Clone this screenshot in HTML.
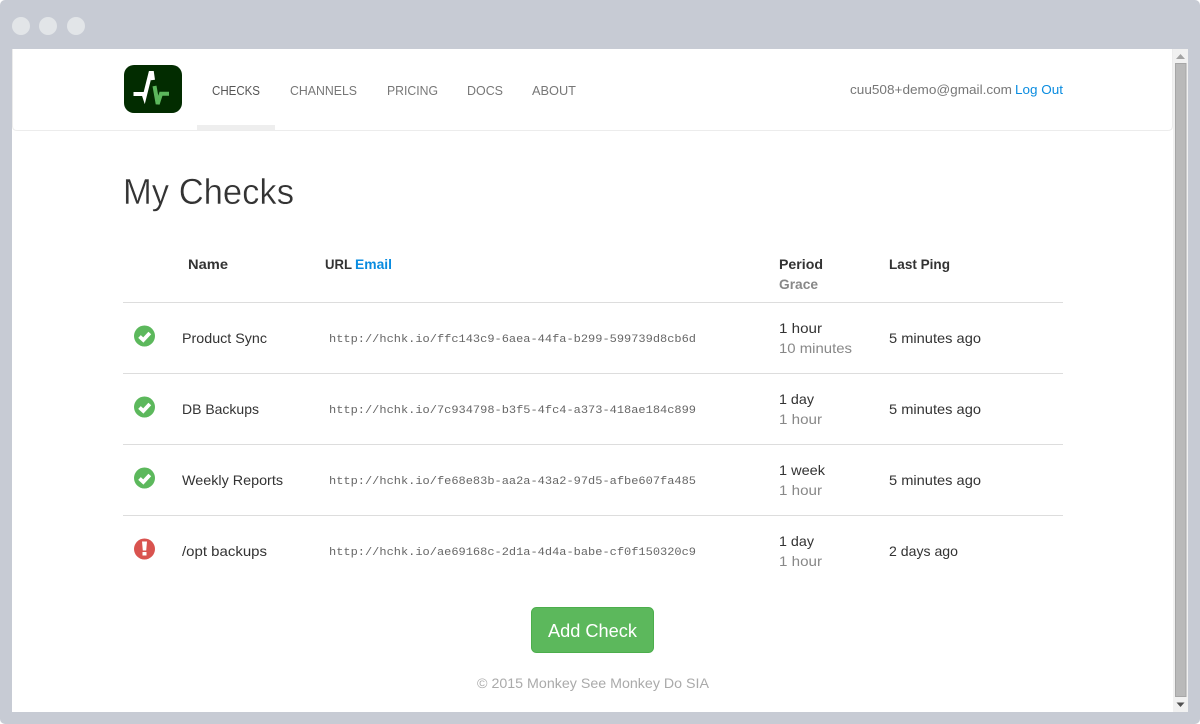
<!DOCTYPE html>
<html lang="en">
<head>
<meta charset="utf-8">
<title>My Checks</title>
<style>
html,body{margin:0;padding:0;width:1200px;height:724px;overflow:hidden;background:#fff}
svg{display:block}
text{font-family:"Liberation Sans",Arial,sans-serif;white-space:pre}
.n{font-size:14px;fill:#333}
.g{font-size:14px;fill:#888}
.b{font-size:14px;font-weight:bold;fill:#333}
.m{font-family:"Liberation Mono",monospace;font-size:11px;fill:#666}
.nav{font-size:13px;fill:#777}
</style>
</head>
<body>
<svg width="1200" height="724" viewBox="0 0 1200 724" xmlns="http://www.w3.org/2000/svg">
  <rect width="1200" height="724" rx="5" fill="#c7cbd4"/>
  <circle cx="21" cy="26" r="9" fill="#e2e5e8"/>
  <circle cx="48" cy="26" r="9" fill="#e2e5e8"/>
  <circle cx="76" cy="26" r="9" fill="#e2e5e8"/>
  <rect x="12" y="49" width="1176" height="663" fill="#fff"/>

  <!-- scrollbar -->
  <rect x="1173" y="49" width="15" height="663" fill="#f1f1f1"/>
  <path d="M1180.500 54 L1185 59 L1176 59 Z" fill="#a3a3a3"/>
  <rect x="1175.500" y="63.500" width="10.500" height="633" fill="#b9b9b9" stroke="#a6a6a6"/>
  <path d="M1176.500 702.500 L1184.500 702.500 L1180.500 707 Z" fill="#505050"/>

  <!-- navbar -->
  <path d="M12.500 49 V126 Q12.500 130.500 17 130.500 H1167.500 Q1172.500 130.500 1172.500 126 V49" fill="none" stroke="#ececec"/>
  <rect x="197" y="125" width="78" height="5" fill="#eeeeee"/>
  <rect x="124" y="65" width="58" height="48" rx="10" fill="#022c00"/>
  <path d="M133.500 94 H143.500 L144.500 97 L150.500 73 H152 L153 80" fill="none" stroke="#fff" stroke-width="4"/>
  <path d="M154.500 86 L157.700 104 L161 93.800 H169" fill="none" stroke="#5cb85c" stroke-width="4"/>

  <text class="nav" x="212" y="95" textLength="48" lengthAdjust="spacingAndGlyphs" style="fill:#555">CHECKS</text>
  <text class="nav" x="290" y="95" textLength="67" lengthAdjust="spacingAndGlyphs">CHANNELS</text>
  <text class="nav" x="387" y="95" textLength="51" lengthAdjust="spacingAndGlyphs">PRICING</text>
  <text class="nav" x="467" y="95" textLength="36" lengthAdjust="spacingAndGlyphs">DOCS</text>
  <text class="nav" x="532" y="95" textLength="44" lengthAdjust="spacingAndGlyphs">ABOUT</text>
  <text x="850" y="94" font-size="13" fill="#777" textLength="162" lengthAdjust="spacingAndGlyphs">cuu508+demo@gmail.com</text>
  <text x="1015" y="94" font-size="13" fill="#0a8ce0" textLength="48" lengthAdjust="spacingAndGlyphs">Log Out</text>

  <!-- heading -->
  <text x="123" y="204" font-size="36" fill="#333" stroke="#fff" stroke-width="0.4" textLength="171" lengthAdjust="spacingAndGlyphs">My Checks</text>

  <!-- table head -->
  <text class="b" x="188" y="269" textLength="40" lengthAdjust="spacingAndGlyphs">Name</text>
  <text class="b" x="325" y="269" textLength="27" lengthAdjust="spacingAndGlyphs">URL</text>
  <text class="b" x="355" y="269" textLength="37" lengthAdjust="spacingAndGlyphs" style="fill:#0a8ce0">Email</text>
  <text class="b" x="779" y="269" textLength="44" lengthAdjust="spacingAndGlyphs">Period</text>
  <text class="b" x="779" y="289" textLength="39" lengthAdjust="spacingAndGlyphs" style="fill:#888">Grace</text>
  <text class="b" x="889" y="269" textLength="61" lengthAdjust="spacingAndGlyphs">Last Ping</text>

  <rect x="123" y="302" width="940" height="1" fill="#ddd"/>
  <rect x="123" y="373" width="940" height="1" fill="#ddd"/>
  <rect x="123" y="444" width="940" height="1" fill="#ddd"/>
  <rect x="123" y="515" width="940" height="1" fill="#ddd"/>

  <!-- row 1 -->
  <circle cx="144.500" cy="336" r="10.500" fill="#5cb85c"/>
  <path d="M139.500 336.500 L143.300 340 L149.800 333" fill="none" stroke="#fff" stroke-width="3.800"/>
  <text class="n" x="182" y="343" textLength="85" lengthAdjust="spacingAndGlyphs">Product Sync</text>
  <text class="m" x="329" y="342" textLength="367" lengthAdjust="spacingAndGlyphs">http://hchk.io/ffc143c9-6aea-44fa-b299-599739d8cb6d</text>
  <text class="n" x="779" y="333" textLength="43" lengthAdjust="spacingAndGlyphs">1 hour</text>
  <text class="g" x="779" y="353" textLength="73" lengthAdjust="spacingAndGlyphs">10 minutes</text>
  <text class="n" x="889" y="343" textLength="92" lengthAdjust="spacingAndGlyphs">5 minutes ago</text>

  <!-- row 2 -->
  <circle cx="144.500" cy="407" r="10.500" fill="#5cb85c"/>
  <path d="M139.500 407.500 L143.300 411 L149.800 404" fill="none" stroke="#fff" stroke-width="3.800"/>
  <text class="n" x="182" y="414" textLength="77" lengthAdjust="spacingAndGlyphs">DB Backups</text>
  <text class="m" x="329" y="413" textLength="367" lengthAdjust="spacingAndGlyphs">http://hchk.io/7c934798-b3f5-4fc4-a373-418ae184c899</text>
  <text class="n" x="779" y="404" textLength="35" lengthAdjust="spacingAndGlyphs">1 day</text>
  <text class="g" x="779" y="424" textLength="43" lengthAdjust="spacingAndGlyphs">1 hour</text>
  <text class="n" x="889" y="414" textLength="92" lengthAdjust="spacingAndGlyphs">5 minutes ago</text>

  <!-- row 3 -->
  <circle cx="144.500" cy="478" r="10.500" fill="#5cb85c"/>
  <path d="M139.500 478.500 L143.300 482 L149.800 475" fill="none" stroke="#fff" stroke-width="3.800"/>
  <text class="n" x="182" y="485" textLength="101" lengthAdjust="spacingAndGlyphs">Weekly Reports</text>
  <text class="m" x="329" y="484" textLength="367" lengthAdjust="spacingAndGlyphs">http://hchk.io/fe68e83b-aa2a-43a2-97d5-afbe607fa485</text>
  <text class="n" x="779" y="475" textLength="46" lengthAdjust="spacingAndGlyphs">1 week</text>
  <text class="g" x="779" y="495" textLength="43" lengthAdjust="spacingAndGlyphs">1 hour</text>
  <text class="n" x="889" y="485" textLength="92" lengthAdjust="spacingAndGlyphs">5 minutes ago</text>

  <!-- row 4 -->
  <circle cx="144.500" cy="549" r="10.500" fill="#d9534f"/>
  <path d="M142 541.500 H147 L146.200 550.500 H142.800 Z" fill="#fff"/>
  <rect x="142.500" y="552" width="4" height="3.500" fill="#fff"/>
  <text class="n" x="182" y="556" textLength="85" lengthAdjust="spacingAndGlyphs">/opt backups</text>
  <text class="m" x="329" y="555" textLength="367" lengthAdjust="spacingAndGlyphs">http://hchk.io/ae69168c-2d1a-4d4a-babe-cf0f150320c9</text>
  <text class="n" x="779" y="546" textLength="35" lengthAdjust="spacingAndGlyphs">1 day</text>
  <text class="g" x="779" y="566" textLength="43" lengthAdjust="spacingAndGlyphs">1 hour</text>
  <text class="n" x="889" y="556" textLength="69" lengthAdjust="spacingAndGlyphs">2 days ago</text>

  <!-- button -->
  <rect x="531.500" y="607.500" width="122" height="45" rx="5" fill="#5cb85c" stroke="#4cae4c"/>
  <text x="548" y="637" font-size="18" fill="#fff" textLength="89" lengthAdjust="spacingAndGlyphs">Add Check</text>

  <!-- footer -->
  <text x="477" y="688" font-size="14" fill="#aaa" textLength="232" lengthAdjust="spacingAndGlyphs">© 2015 Monkey See Monkey Do SIA</text>
</svg>
</body>
</html>
